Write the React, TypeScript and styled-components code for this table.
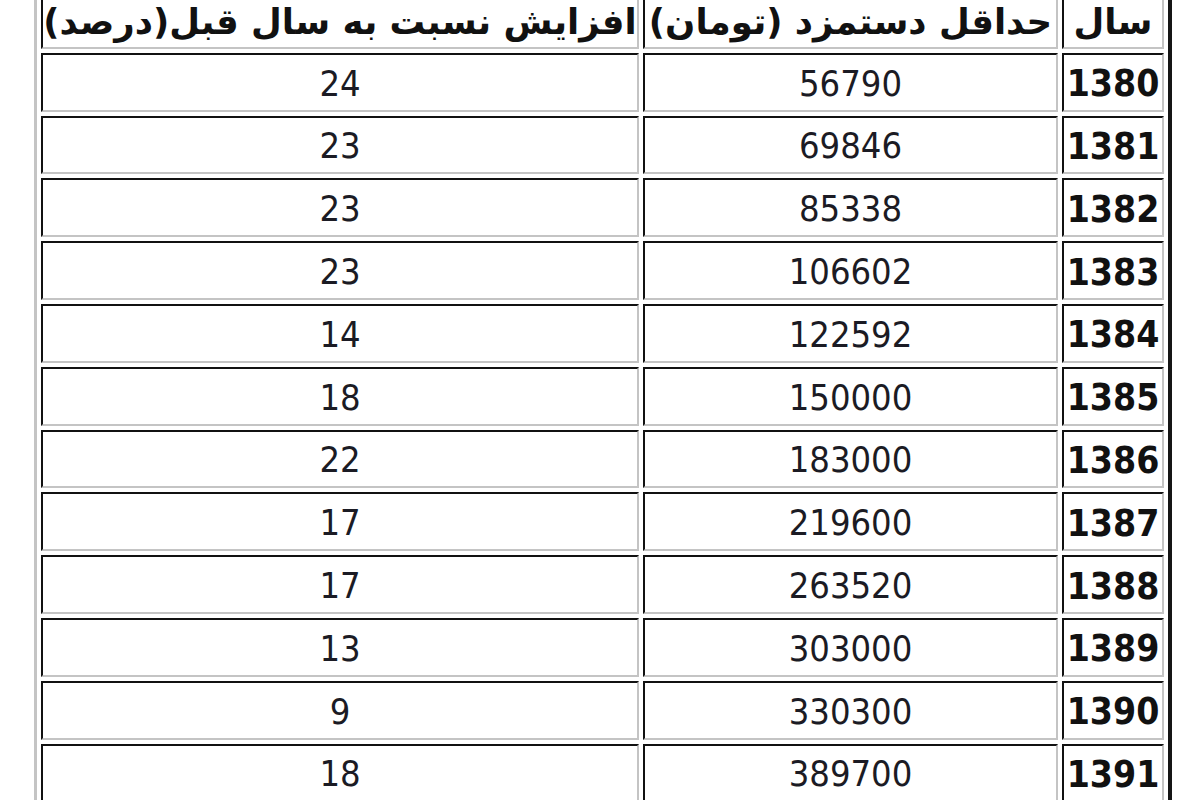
import React from "react";
import styled, { createGlobalStyle } from "styled-components";

const Global = createGlobalStyle`
  html, body { margin: 0; padding: 0; background: #ffffff; }
  body { overflow: hidden; width: 1200px; height: 800px; }
`;

const Table = styled.table`
  margin: -14px 0 0 34px;
  width: 1138px;
  table-layout: fixed;
  border-collapse: separate;
  border-spacing: 4px;
  border-top: 3px solid #c4c4c4;
  border-left: 3px solid #c4c4c4;
  border-right: 4px solid #151515;
  border-bottom: 4px solid #151515;
  background: #ffffff;
`;

const Cell = styled.td<{ $w?: number }>`
  box-sizing: border-box;
  ${(p) => (p.$w ? `width: ${p.$w}px;` : "")}
  height: 58.8px;
  padding: 3px 0 0 0;
  border-top: 2px solid #111111;
  border-left: 2px solid #111111;
  border-bottom: 2px solid #c4c4c4;
  border-right: 2px solid #c4c4c4;
  text-align: center;
  vertical-align: middle;
  white-space: nowrap;
  overflow: hidden;
  color: #1b1b24;
  font-family: "DejaVu Sans Condensed", "DejaVu Sans", sans-serif;
  font-size: 36px;
  line-height: 1;
`;

const HeadCell = styled(Cell).attrs({ as: "th" })<{ $w?: number }>`
  height: 55.8px;
  padding-top: 2px;
  font-family: "DejaVu Sans", sans-serif;
  font-weight: bold;
  font-size: 35.5px;
  color: #111111;
`;

const YearCell = styled(Cell)`
  font-weight: bold;
  font-size: 37px;
  color: #111111;
`;

const rows: [string, string, string][] = [
  ["1380", "56790", "24"],
  ["1381", "69846", "23"],
  ["1382", "85338", "23"],
  ["1383", "106602", "23"],
  ["1384", "122592", "14"],
  ["1385", "150000", "18"],
  ["1386", "183000", "22"],
  ["1387", "219600", "17"],
  ["1388", "263520", "17"],
  ["1389", "303000", "13"],
  ["1390", "330300", "9"],
  ["1391", "389700", "18"],
];

export default function App() {
  return (
    <>
      <Global />
      <Table dir="rtl">
        <thead>
          <tr>
            <HeadCell $w={102}>سال</HeadCell>
            <HeadCell $w={415}>حداقل دستمزد (تومان)</HeadCell>
            <HeadCell $w={598}>افزایش نسبت به سال قبل(درصد)</HeadCell>
          </tr>
        </thead>
        <tbody>
          {rows.map(([y, w, p]) => (
            <tr key={y}>
              <YearCell>{y}</YearCell>
              <Cell>{w}</Cell>
              <Cell>{p}</Cell>
            </tr>
          ))}
        </tbody>
      </Table>
    </>
  );
}
